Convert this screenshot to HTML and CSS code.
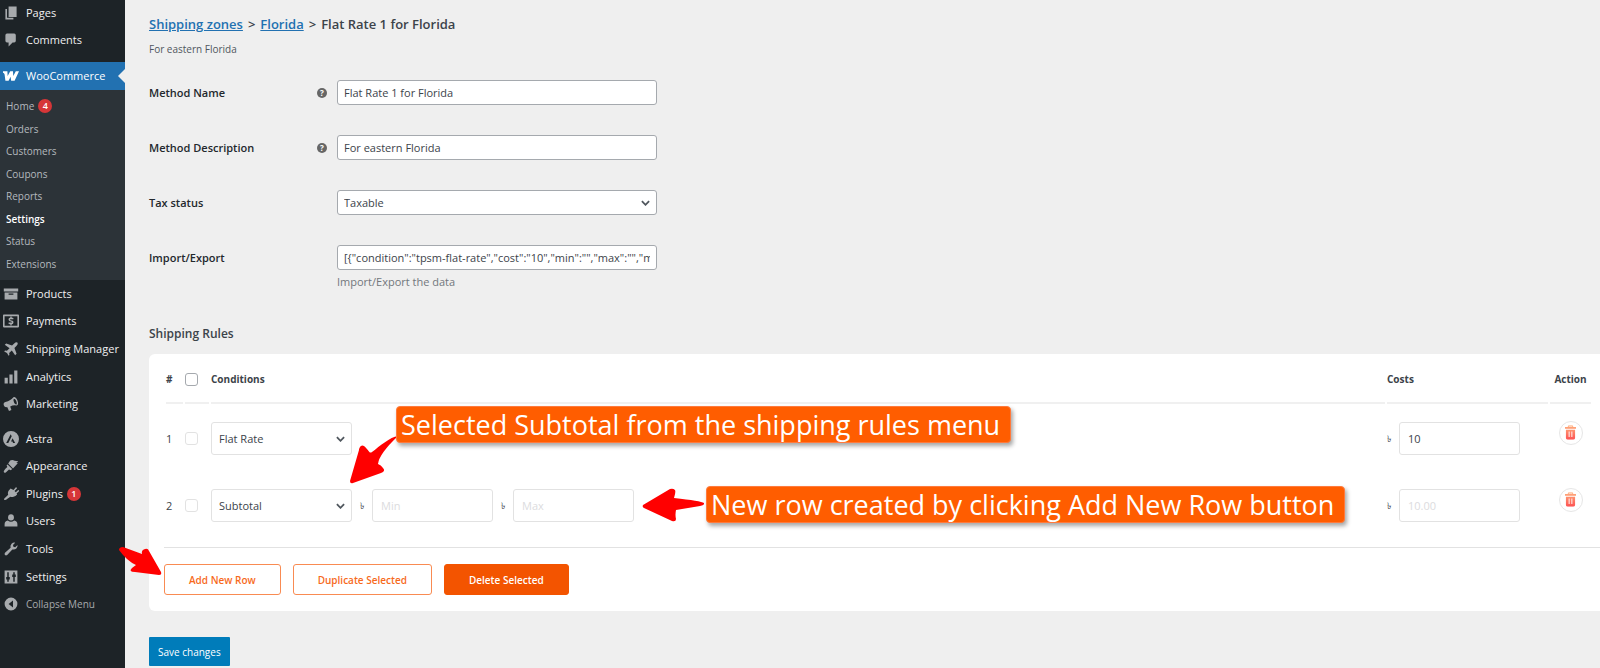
FILE: index.html
```html
<!DOCTYPE html>
<html lang="en">
<head>
  <meta charset="UTF-8" />
  <title>Shipping Rules</title>
  <link rel="stylesheet" href="styles.css">
</head>
<body>
  <div class="layout">
    <nav class="sidebar">
      <ul class="menu menu-top">
        <li><a href="#"><svg class="icon" viewBox="0 0 20 20"><path d="M7 15V2h10v13zM5 16h8v2H3V5h2z"/></svg>Pages</a></li>
        <li><a href="#"><svg class="icon" viewBox="0 0 20 20"><path d="M5 2h9q2 0 2 2v7q0 2-2 2h-2l-5 5v-5H5q-2 0-2-2V4q0-2 2-2z"/></svg>Comments</a></li>
      </ul>

      <a class="current" href="#"><svg class="icon" viewBox="0 0 20 20"><path d="M0 4h5.500l.3 6L9 4h3.500l.3 6L16 4h4l-5.500 12h-4.300L9.500 11 7 16H3L2 8Q1.500 6 0 6z"/></svg>WooCommerce</a>
      <ul class="submenu">
        <li><a href="#">Home <span class="count">4</span></a></li>
        <li><a href="#">Orders</a></li>
        <li><a href="#">Customers</a></li>
        <li><a href="#">Coupons</a></li>
        <li><a href="#">Reports</a></li>
        <li><a class="active" href="#">Settings</a></li>
        <li><a href="#">Status</a></li>
        <li><a href="#">Extensions</a></li>
      </ul>

      <ul class="menu menu-shop">
        <li><a href="#"><svg class="icon" viewBox="0 0 20 20"><path fill-rule="evenodd" d="M1 3h18v4H1zM2 8h16v9H2zM7 9.500v1.500h6V9.500z"/></svg>Products</a></li>
        <li><a href="#"><svg class="icon" viewBox="0 0 20 20"><path fill-rule="evenodd" d="M1 2h18q1 0 1 1v14q0 1-1 1H1q-1 0-1-1V3q0-1 1-1zM2 4v12h16V4z"/><path d="M9.200 4.500h1.600v1.200l2.200.5v1.600H9q-.6.8.4 1.200l2.600.8q1.500.8 1 2.600-.5 1.400-2.200 1.700v1.400H9.200v-1.400L7 13.600V12h4q.8-.8-.4-1.200L8 10Q6.500 9 7 7.300q.6-1.300 2.200-1.600z"/></svg>Payments</a></li>
        <li><a href="#"><svg class="icon" viewBox="0 0 20 20"><path d="M18 2q1.500 1.500-1 4l-2.700 2.700L17 16l-1.800 1.800-4.200-6-3.300 3.300.3 2.400-1 1-2-3.500L1.500 13l1-1 2.400.3L8.200 9 2.200 4.800 4 3l7.300 2.700L14 3q2.500-2.500 4-1z"/></svg>Shipping Manager</a></li>
        <li><a href="#"><svg class="icon" viewBox="0 0 20 20"><path d="M14 2h4v16h-4zM8 7h4v11H8zM2 11h4v7H2z"/></svg>Analytics</a></li>
        <li><a href="#"><svg class="icon" viewBox="0 0 20 20"><path fill-rule="evenodd" d="M18.200 5.900q1.800 5-1.200 6-4-1-8 1.100l1.500 4.500-3 1.300-2.300-5Q2 14.500 1 11.500T3 7.500Q10 5.500 13 1.500q3-1 5.200 4.400zM13.500 3.500q-1 1.500.3 4.500t3.200 2.500q.8-1.500-.4-4.200T13.500 3.500z"/></svg>Marketing</a></li>
      </ul>

      <ul class="menu menu-admin">
        <li><a href="#"><svg class="icon" viewBox="0 0 20 20"><path fill-rule="evenodd" d="M10 0a10 10 0 1 0 0 20 10 10 0 0 0 0-20zM9.600 4 4 15h2.600l4.300-8.400zM12 9l-2 4h1.800l.8 2h2.600z"/></svg>Astra</a></li>
        <li><a href="#"><svg class="icon" viewBox="0 0 20 20"><path d="M14.500 3.500 19 4q-1 1.500-2.500 2l2 .5-6 6.500L6.500 7 9 3q3-1.500 5.500.5zM5.700 8l5.800 5.800-1.700 1.400-2.300-.7-4 3.500q-2 1-2.500-.5T4 12.500l1.500-1.300L4.500 9z"/></svg>Appearance</a></li>
        <li><a href="#"><svg class="icon" viewBox="0 0 20 20"><path d="m13.100 4.900 3-3.300q1.400 0 1.300 1.400l-3 3.300 1.600 1.600 3-3q1.400.2 1 1.600l-3 3 .7 1q-2 2.500-4.500 3-2 .8-4 0L5.500 16q-2 2-4 1.500-.5-2 1.500-3L6.500 11Q5.500 8.500 7 6l2.500-3z"/></svg>Plugins <span class="count">1</span></a></li>
        <li><a href="#"><svg class="icon" viewBox="0 0 20 20"><path d="M10 9.300A3.700 3.700 0 0 1 6.300 5.500Q6.500 1.700 10 1.700t3.700 3.800A3.700 3.700 0 0 1 10 9.300zM6 9.500q4 3 8 0 4 1 4 4.500V17H2v-3q0-3.500 4-4.500z"/></svg>Users</a></li>
        <li><a href="#"><svg class="icon" viewBox="0 0 20 20"><path d="M16.700 9.300q-2.200 2-5 1.200l-6.500 7q-1.500 1-2.700 0t0-2.700l7-6.500q-.9-2.800 1.200-5 2-1.700 4.500-1.200L12.500 5l.5 2.200 2.200.5 3-2.700q.3 2.500-1.500 4.300z"/></svg>Tools</a></li>
        <li><a href="#"><svg class="icon" viewBox="0 0 20 20"><path fill-rule="evenodd" d="M2 2h16v16H2zM5.300 4v6H4v3h1.300v3h1.900v-3h1.300v-3H7.200V4zM12.800 4v3h-1.300v3h1.300v6h1.900v-6H16V7h-1.300V4z"/></svg>Settings</a></li>
        <li><button class="collapse" type="button"><svg class="icon" viewBox="0 0 20 20"><path fill-rule="evenodd" d="M10 2a8 8 0 1 0 0 16 8 8 0 0 0 0-16zM12.500 5.500v9L7 10z"/></svg>Collapse Menu</button></li>
      </ul>
    </nav>

    <main class="content">
      <h1 class="crumbs"><a href="#">Shipping zones</a><span class="sep">&gt;</span><a href="#">Florida</a><span class="sep">&gt;</span>Flat Rate 1 for Florida</h1>
      <p class="intro">For eastern Florida</p>

      <div class="fields">
        <div class="field">
          <label for="name">Method Name</label>
          <span class="help">?</span>
          <input id="name" class="control" type="text" value="Flat Rate 1 for Florida">
        </div>
        <div class="field">
          <label for="description">Method Description</label>
          <span class="help">?</span>
          <input id="description" class="control" type="text" value="For eastern Florida">
        </div>
        <div class="field">
          <label for="tax">Tax status</label>
          <span></span>
          <span class="select">
            <select id="tax" class="control"><option>Taxable</option></select>
            <svg class="chevron" viewBox="0 0 10 6"><path d="M1 1l4 4 4-4"/></svg>
          </span>
        </div>
        <div class="field">
          <label for="data">Import/Export</label>
          <span></span>
          <input id="data" class="control" type="text" value='[{"condition":"tpsm-flat-rate","cost":"10","min":"","max":"","multiply":""}]'>
          <p class="note">Import/Export the data</p>
        </div>
      </div>

      <h2>Shipping Rules</h2>
      <section class="card">
        <table class="rules">
          <thead>
            <tr>
              <th class="col-num">#</th>
              <th class="col-check"><input type="checkbox" aria-label="Select all"></th>
              <th>Conditions</th>
              <th class="col-cost">Costs</th>
              <th class="col-action">Action</th>
            </tr>
          </thead>
          <tbody>
            <tr>
              <td class="col-num">1</td>
              <td class="col-check"><input type="checkbox" aria-label="Select row 1"></td>
              <td>
                <div class="cell">
                  <span class="select">
                    <select class="box" aria-label="Condition 1"><option>Flat Rate</option></select>
                    <svg class="chevron" viewBox="0 0 10 6"><path d="M1 1l4 4 4-4"/></svg>
                  </span>
                </div>
              </td>
              <td><div class="cell cost"><span class="taka">৳</span><input class="box" type="text" aria-label="Cost 1" value="10"></div></td>
              <td class="col-action">
                <button class="trash" type="button" aria-label="Delete row 1"><svg viewBox="0 0 12 16"><use href="#bin"/></svg></button>
              </td>
            </tr>
            <tr>
              <td class="col-num">2</td>
              <td class="col-check"><input type="checkbox" aria-label="Select row 2"></td>
              <td>
                <div class="cell">
                  <span class="select">
                    <select class="box" aria-label="Condition 2"><option>Subtotal</option></select>
                    <svg class="chevron" viewBox="0 0 10 6"><path d="M1 1l4 4 4-4"/></svg>
                  </span>
                  <span class="taka">৳</span><input class="box" type="text" aria-label="Minimum" placeholder="Min">
                  <span class="taka">৳</span><input class="box" type="text" aria-label="Maximum" placeholder="Max">
                </div>
              </td>
              <td><div class="cell cost"><span class="taka">৳</span><input class="box" type="text" aria-label="Cost 2" placeholder="10.00"></div></td>
              <td class="col-action">
                <button class="trash" type="button" aria-label="Delete row 2"><svg viewBox="0 0 12 16"><use href="#bin"/></svg></button>
              </td>
            </tr>
          </tbody>
        </table>
        <div class="actions">
          <button class="btn" type="button">Add New Row</button>
          <button class="btn" type="button">Duplicate Selected</button>
          <button class="btn btn-solid" type="button">Delete Selected</button>
        </div>
      </section>
      <button class="save" type="submit">Save changes</button>
    </main>
  </div>

  <!-- annotations -->
  <svg class="arrow arrow-select" viewBox="0 0 50 52"><path d="M49 2C41 3 31 12 23 18 20 20 20 16 15 12 12 10 10 14 10 16L1 47Q1 50 4 49L32 39Q37 37 34 34 32 31 29 30 30 20 49 2z"/></svg>
  <svg class="arrow arrow-row" viewBox="0 0 62 34"><path d="M1 17Q0 19 2 20L30 33Q34 34 34 31 33 27 34 22L58 18Q63 17 62 15 59 13 32 10 34 4 33 2 31 0 28 1z"/></svg>
  <svg class="arrow arrow-add" viewBox="0 0 44 30"><path d="M1 3Q1 0 5 0L24 7Q23 3 27 2 30 1 31 4L43 25Q44 28 41 28L17 25Q10 25 14 21L18 18Q9 14 1 3z"/></svg>
  <div class="callout callout-select">Selected Subtotal from the shipping rules menu</div>
  <div class="callout callout-row">New row created by clicking Add New Row button</div>

  <svg class="defs" aria-hidden="true">
    <defs>
      <linearGradient id="flame" x1="0" y1="0" x2="0" y2="1">
        <stop offset="0" stop-color="#ffb07c"/>
        <stop offset="1" stop-color="#fd5052"/>
      </linearGradient>
      <symbol id="bin" viewBox="0 0 12 16">
        <path fill="url(#flame)" fill-rule="evenodd" d="M4 0h4q1 0 1 2h3v2H0V2h3q0-2 1-2zM4 1.500V2h4v-.5zM1 5h10v9q0 2-2 2H3q-2 0-2-2zM4 7v6h1V7zM7 7v6h1V7z"/>
      </symbol>
    </defs>
  </svg>
</body>
</html>
```

FILE: styles.css
```css
* {
  box-sizing: border-box;
}
body {
  margin: 0;
  position: relative;
  background: #efefef;
  color: #3c434a;
  font-family: "Open Sans", "Noto Sans", sans-serif;
  font-size: 11px;
  line-height: 16px;
}
h1, h2, p, ul {
  margin: 0;
  padding: 0;
}
ul {
  list-style: none;
}
button, input, select {
  font: inherit;
}
.layout {
  display: grid;
  grid-template-columns: 125px minmax(0, 1fr);
  min-height: 100vh;
}

/* sidebar */
.sidebar {
  background: #1d2327;
  white-space: nowrap;
}
.sidebar a, .collapse {
  display: flex;
  align-items: center;
  gap: 7px;
  padding: 0 0 0 3px;
  color: #f0f0f1;
  text-decoration: none;
}
.menu, .submenu {
  display: grid;
  align-items: center;
}
.menu-top {
  min-height: 53px;
  margin-bottom: 9px;
}
.menu-shop {
  min-height: 138px;
  margin-bottom: 7px;
}
.menu-admin {
  min-height: 193px;
}
.icon {
  width: 16px;
  height: 16px;
  fill: #a7aaad;
  flex: none;
}
.sidebar .current {
  position: relative;
  height: 28px;
  background: #2271b1;
  color: #fff;
}
.current .icon {
  fill: #fff;
}
.current::after {
  content: "";
  position: absolute;
  right: 0;
  top: 7px;
  border: 7px solid transparent;
  border-left: 0;
  border-right-color: #efefef;
}
.submenu {
  min-height: 190px;
  padding: 5px 0;
  background: #2c3338;
}
.submenu a {
  gap: 4px;
  padding-left: 6px;
  color: #b4b9be;
  font-size: 10px;
}
.submenu .active {
  color: #fff;
  font-weight: 600;
}
.count {
  width: 14px;
  height: 14px;
  border-radius: 50%;
  background: #d63638;
  color: #fff;
  font-size: 9px;
  font-weight: 600;
  line-height: 14px;
  text-align: center;
}
.menu .count {
  margin-left: -3px;
}
.sidebar .collapse {
  border: 0;
  background: none;
  color: #a7aaad;
  font-size: 10px;
}

/* page */
.content {
  padding: 14px 0 3px 24px;
}
.crumbs {
  font-size: 13px;
  font-weight: 600;
  line-height: 20px;
}
.crumbs a {
  color: #2271b1;
}
.crumbs .sep {
  margin: 0 5px;
}
.intro {
  margin-top: 7px;
  color: #50575e;
  font-size: 10px;
}
.fields {
  margin-top: 23px;
}
.field {
  display: grid;
  grid-template-columns: 168px 20px 320px;
  align-items: center;
  min-height: 55px;
  align-content: start;
}
.field label {
  color: #23282d;
  font-weight: 600;
}
.help {
  width: 10px;
  height: 10px;
  border-radius: 50%;
  background: #666;
  color: #fff;
  font-size: 8px;
  font-weight: 700;
  line-height: 10px;
  text-align: center;
}
.control {
  width: 100%;
  height: 25px;
  padding: 0 6px;
  border: 1px solid #a5a9ae;
  border-radius: 3px;
  background: #fff;
  color: #3c434a;
}
.note {
  grid-column: 3;
  margin-top: 4px;
  color: #72777c;
}
.select {
  position: relative;
  display: block;
}
.select select {
  appearance: none;
}
.chevron {
  position: absolute;
  right: 7px;
  top: 50%;
  width: 9px;
  height: 6px;
  margin-top: -3px;
  fill: none;
  stroke: #50575e;
  stroke-width: 2;
  pointer-events: none;
}
h2 {
  margin: 26px 0 12px;
  font-size: 12px;
  font-weight: 600;
  line-height: 16px;
}

/* rules table */
.card {
  padding-left: 15px;
  border-radius: 6px 0 0 6px;
  background: #fff;
}
.rules {
  width: calc(100% - 7px);
  border-spacing: 2px;
}
.rules th {
  height: 48px;
  padding: 0;
  border-bottom: 2px solid #f0f0f0;
  font-size: 10px;
  font-weight: 700;
  text-align: left;
}
.rules td {
  height: 65px;
  padding: 0;
}
.rules .col-num {
  width: 17px;
}
.rules .col-check {
  width: 24px;
}
.rules .col-cost {
  width: 161px;
}
.rules .col-action {
  width: 41px;
  text-align: center;
}
.rules input[type="checkbox"] {
  appearance: none;
  display: block;
  width: 13px;
  height: 13px;
  margin: 0;
  border: 1px solid #e2e2e2;
  border-radius: 3px;
  background: #fff;
}
.rules th input[type="checkbox"] {
  border-color: #a5a9ae;
}
.cell {
  display: flex;
  align-items: center;
}
.box {
  width: 121px;
  height: 33px;
  padding: 0 8px;
  border: 1px solid #e2e2e2;
  border-radius: 3px;
  background: #fff;
  color: #3c434a;
}
select.box {
  width: 141px;
  padding: 0 7px;
}
.box::placeholder {
  color: #dcdcde;
}
.taka {
  width: 20px;
  font-size: 9px;
  text-align: center;
}
.cost .taka {
  width: 12px;
  text-align: left;
}
.trash {
  display: grid;
  place-items: center;
  width: 24px;
  height: 24px;
  margin: 0 auto 12px;
  padding: 0;
  border: 1px solid #e6e6e6;
  border-radius: 50%;
  background: #fff;
}
.trash svg {
  width: 11px;
  height: 15px;
}
.actions {
  display: flex;
  gap: 12px;
  margin-top: 7px;
  padding: 16px 0;
  border-top: 1px solid #e2e2e2;
}
.btn {
  height: 31px;
  padding: 0 24px;
  border: 1px solid #f98b52;
  border-radius: 3px;
  background: #fff;
  color: #f76a1c;
  font-size: 10px;
  font-weight: 600;
}
.btn-solid {
  border-color: #f35400;
  background: #f35400;
  color: #fff;
}
.save {
  height: 29px;
  margin-top: 26px;
  padding: 0 9px;
  border: 0;
  border-radius: 1px;
  background: #007cba;
  color: #fff;
  font-size: 10px;
}

/* annotations */
.callout {
  position: absolute;
  height: 37px;
  padding: 0 10px 0 4px;
  border: 1px solid #ff7a3d;
  border-radius: 4px;
  background: #ff5d00;
  box-shadow: 2px 3px 4px rgba(0, 0, 0, 0.35);
  color: #fff;
  font-size: 27px;
  line-height: 35px;
  white-space: nowrap;
}
.callout-select {
  left: 396px;
  top: 406px;
}
.callout-row {
  left: 706px;
  top: 486px;
}
.arrow {
  position: absolute;
  fill: #f00;
}
.arrow-select {
  left: 349px;
  top: 434px;
  width: 50px;
  height: 52px;
}
.arrow-row {
  left: 642px;
  top: 488px;
  width: 62px;
  height: 34px;
}
.arrow-add {
  left: 118px;
  top: 547px;
  width: 44px;
  height: 30px;
}
.defs {
  position: absolute;
  width: 0;
  height: 0;
}
```
